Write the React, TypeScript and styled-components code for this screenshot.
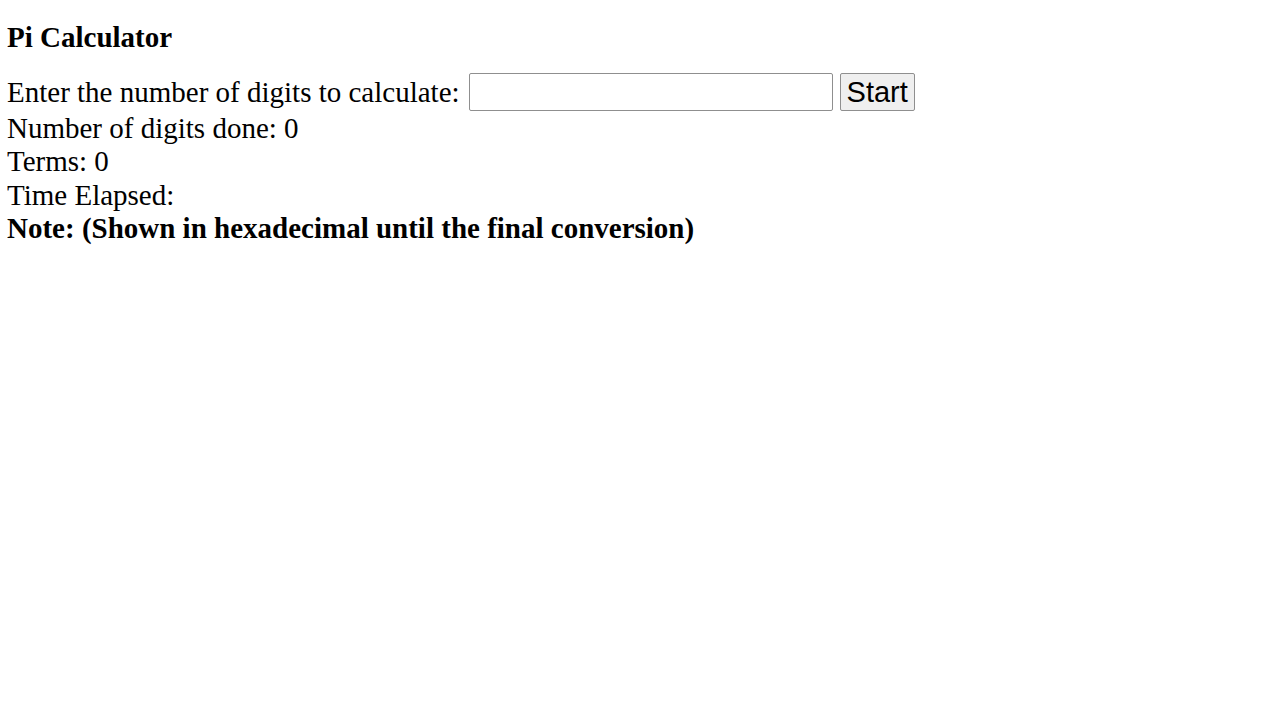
import React from 'react';
import styled, { createGlobalStyle } from 'styled-components';

const GlobalStyle = createGlobalStyle`
  body {
    margin: 8px 7px;
    background: #fff;
    color: #000;
    font-family: "Liberation Serif", "Times New Roman", serif;
  }
`;

const Title = styled.h3`
  margin: 13px 0 19px;
  font-size: 29px;
  line-height: 33px;
  font-weight: 700;
`;

const Row = styled.div`
  display: flex;
  align-items: center;
  gap: 7px;
  margin-bottom: 1px;
  font-size: 29px;
  line-height: 33px;
`;

const Label = styled.span`
  margin-right: 2px;
`;

const DigitsInput = styled.input`
  box-sizing: border-box;
  width: 364px;
  height: 38px;
  margin: 0;
  border: 1px solid #8f8f8f;
  border-radius: 2px;
  background: #fff;
  font-size: 24px;
`;

const StartButton = styled.button`
  box-sizing: border-box;
  height: 38px;
  padding: 0 6px;
  margin: 0;
  border: 1px solid #8f8f8f;
  border-radius: 2px;
  background: #efefef;
  color: #000;
  font-family: "Liberation Sans", Arial, sans-serif;
  font-size: 29px;
  line-height: 1;
`;

const Line = styled.div<{ $bold?: boolean }>`
  font-size: 29px;
  line-height: 33.3px;
  font-weight: ${(p) => (p.$bold ? 700 : 400)};
`;

export default function App() {
  return (
    <>
      <GlobalStyle />
      <Title>Pi Calculator</Title>
      <Row>
        <Label>Enter the number of digits to calculate:</Label>
        <DigitsInput type="text" />
        <StartButton type="button">Start</StartButton>
      </Row>
      <Line>Number of digits done: 0</Line>
      <Line>Terms: 0</Line>
      <Line>Time Elapsed: </Line>
      <Line $bold>Note: (Shown in hexadecimal until the final conversion)</Line>
    </>
  );
}
